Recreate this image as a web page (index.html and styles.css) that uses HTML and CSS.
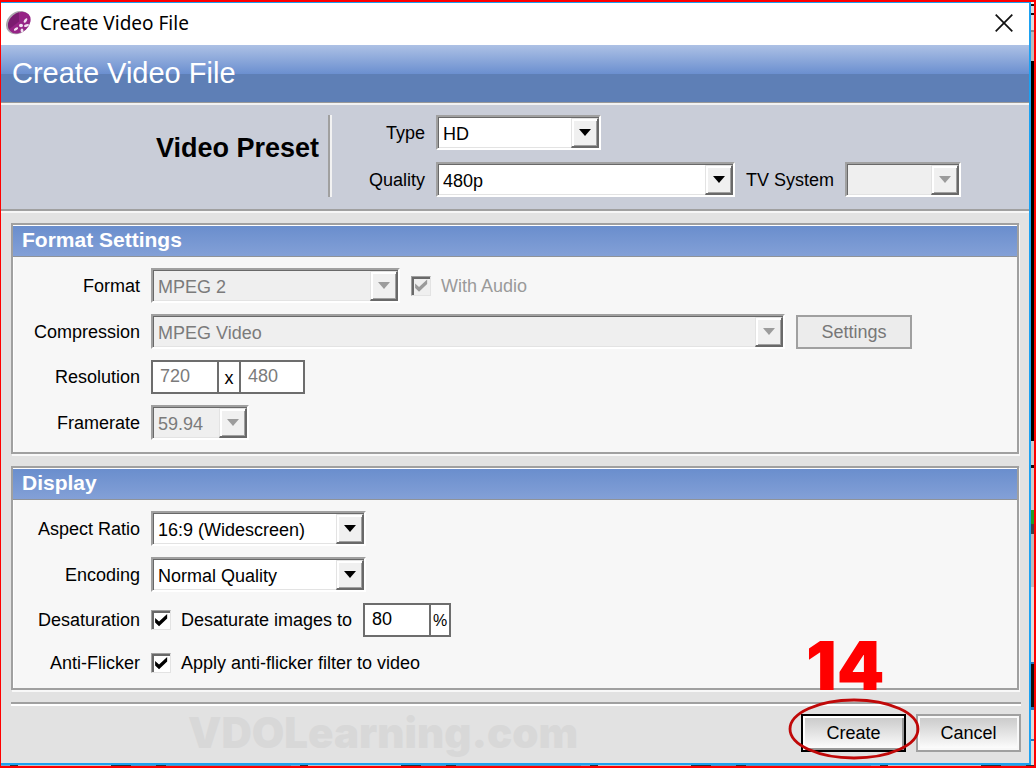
FILE: index.html
```html
<!DOCTYPE html>
<html lang="en">
<head>
<meta charset="utf-8">
<title>Create Video File</title>
<link rel="stylesheet" href="styles.css">
</head>
<body>
<div class="screen">
  <main class="window">
    <header class="titlebar">
      <svg class="app-icon" viewBox="0 0 28 28" aria-hidden="true">
        <g transform="rotate(-42 13 14)">
          <ellipse cx="12.500" cy="13" rx="13" ry="10.500" fill="#aaa6ac"/>
          <ellipse cx="13.500" cy="14" rx="12.500" ry="9.500" fill="#962486"/>
          <path d="M1.500 12C3 5 12 3 20 6L14 13Z" fill="#7b1c70"/>
        </g>
        <g fill="#f2e2f0">
          <ellipse cx="15" cy="16.500" rx="2" ry="1.700"/>
          <ellipse cx="19.500" cy="11.500" rx="1.300" ry="2.600" transform="rotate(35 19.500 11.500)"/>
          <ellipse cx="20.500" cy="16.500" rx="2.600" ry="1.300" transform="rotate(-15 20.500 16.500)"/>
          <ellipse cx="16" cy="21.500" rx="1.400" ry="2"/>
          <ellipse cx="10" cy="20" rx="2.400" ry="1.300" transform="rotate(-35 10 20)"/>
        </g>
      </svg>
      <span class="titlebar-text">Create Video File</span>
      <button class="close" type="button" aria-label="Close">
        <svg viewBox="0 0 18 18" aria-hidden="true"><path d="M.7.7l16.600 16.600M17.300.7L.7 17.300" stroke="#111" stroke-width="1.700" fill="none"/></svg>
      </button>
    </header>

    <h1 class="banner">Create Video File</h1>

    <section class="preset">
      <h2 class="preset-title">Video Preset</h2>
      <div class="preset-fields">
        <div class="row">
          <label class="label" for="type">Type</label>
          <span class="combo w-type"><select id="type"><option>HD</option></select><span class="arrow"></span></span>
        </div>
        <div class="row">
          <label class="label" for="quality">Quality</label>
          <span class="combo w-quality"><select id="quality"><option>480p</option></select><span class="arrow"></span></span>
          <label for="tv">TV System</label>
          <span class="combo w-tv off"><select id="tv" disabled><option></option></select><span class="arrow"></span></span>
        </div>
      </div>
    </section>

    <div class="content">
      <section class="panel">
        <h2 class="panel-title">Format Settings</h2>
        <div class="panel-body">
          <div class="row">
            <label class="label" for="format">Format</label>
            <span class="combo w-format off"><select id="format" disabled><option>MPEG 2</option></select><span class="arrow"></span></span>
            <label class="check off"><input type="checkbox" checked disabled>With Audio</label>
          </div>
          <div class="row">
            <label class="label" for="compression">Compression</label>
            <span class="combo w-compression off"><select id="compression" disabled><option>MPEG Video</option></select><span class="arrow"></span></span>
            <button class="settings" type="button" disabled>Settings</button>
          </div>
          <div class="row">
            <label class="label" for="res-w">Resolution</label>
            <span class="entry off"><input id="res-w" type="text" value="720" disabled><span class="unit">x</span><input type="text" value="480" aria-label="Resolution height" disabled></span>
          </div>
          <div class="row">
            <label class="label" for="rate">Framerate</label>
            <span class="combo w-rate off"><select id="rate" disabled><option>59.94</option></select><span class="arrow"></span></span>
          </div>
        </div>
      </section>

      <section class="panel">
        <h2 class="panel-title">Display</h2>
        <div class="panel-body display">
          <div class="row">
            <label class="label" for="aspect">Aspect Ratio</label>
            <span class="combo w-display"><select id="aspect"><option>16:9 (Widescreen)</option></select><span class="arrow"></span></span>
          </div>
          <div class="row">
            <label class="label" for="encoding">Encoding</label>
            <span class="combo w-display"><select id="encoding"><option>Normal Quality</option></select><span class="arrow"></span></span>
          </div>
          <div class="row">
            <span class="label">Desaturation</span>
            <label class="check"><input type="checkbox" checked>Desaturate images to</label>
            <span class="entry"><input type="text" value="80" aria-label="Desaturation percent"><span class="unit percent">%</span></span>
          </div>
          <div class="row short">
            <span class="label">Anti-Flicker</span>
            <label class="check"><input type="checkbox" checked>Apply anti-flicker filter to video</label>
          </div>
        </div>
      </section>

      <footer class="footer">
        <span class="watermark">VDOLearning.com</span>
        <span class="marked">
          <button class="action primary" type="button">Create</button>
          <span class="step">14</span>
          <svg class="ring" viewBox="0 0 132 62" aria-hidden="true"><ellipse cx="66" cy="31" rx="64" ry="29" fill="none" stroke="#c00808" stroke-width="2.800"/></svg>
        </span>
        <button class="action" type="button">Cancel</button>
      </footer>
    </div>
  </main>
  <div class="behind-right"></div>
  <div class="behind-bottom"></div>
</div>
</body>
</html>
```
FILE: styles.css
```css
* { box-sizing: border-box; }

body {
  margin: 0;
  font: 18px/22px "Liberation Sans", Arial, sans-serif;
  color: #000;
}

h1, h2 { margin: 0; font-weight: normal; }
button, input, select { font: inherit; color: inherit; margin: 0; }

.screen {
  min-height: 100vh;
  display: grid;
  grid-template: 1fr 1px / 1fr 3px;
  border: solid #f00;
  border-width: 2px 2px 2px 1px;
}

.window {
  display: flex;
  flex-direction: column;
  background: #e2e2e2;
  border: solid #1ba1f2;
  border-width: 1px 2px 2px 0;
}

.behind-right {
  background: linear-gradient(#eee 0 2px, #111 2px 4px, #ddd 4px 11px, #111 11px 13px, #ddd 13px 28px, #888 28px 30px, #bbb 30px 59px, #000 59px 439px, #ccc 439px 463px, #111 463px 466px, #ccc 466px 508px, #259b25 508px 522px, #444 522px 532px, #bbb 532px 585px, #ddd 585px 660px, #2878b5 660px 662px, #111 662px 705px, #2878b5 705px 708px, #ddd 708px 737px, #2878b5 737px 739px, #ddd 739px);
}

.behind-bottom {
  grid-column: 1 / -1;
  background: repeating-linear-gradient(90deg, #7ba6c5 0 9px, #29343d 9px 17px, #bec2c4 17px 110px, #29343d 110px 130px, #5791b8 130px 155px, #29343d 155px 165px, #5791b8 165px 290px);
}

.titlebar {
  display: flex;
  align-items: center;
  height: 42px;
  padding: 0 16px 2px 5px;
  background: #fff;
  font: 19px/24px "Noto Sans", "Open Sans", sans-serif;
}
.app-icon { width: 28px; height: 28px; margin-right: 6px; }
.titlebar-text { flex: 1; }
.close { padding: 0; border: 0; background: none; display: flex; }
.close svg { width: 18px; height: 18px; }

.banner {
  height: 58px;
  padding: 0 11px;
  border-bottom: 1px solid #999;
  background: linear-gradient(#adc1e5, #6c90d0 50%, #5e7fb6 50%);
  color: #fff;
  font-size: 29px;
  line-height: 56px;
}

.preset {
  display: flex;
  align-items: stretch;
  padding: 10px 0 12px;
  background: #c9cdd8;
  border-top: 2px solid #f2f2f2;
  border-bottom: 2px solid #a0a0a0;
  box-shadow: 0 2px #f6f6f6;
}
.preset-title {
  width: 331px;
  padding: 18px 11px 0 0;
  border-right: 2px solid #f2f2f2;
  box-shadow: inset -2px 0 #a0a0a0;
  text-align: right;
  font-weight: bold;
  font-size: 27px;
  line-height: 30px;
}
.preset-fields { display: flex; flex-direction: column; gap: 12px; }
.preset .label { width: 93px; }

.row { display: flex; align-items: center; gap: 11px; min-height: 34px; }
.row.short { min-height: 30px; }
.label { width: 127px; text-align: right; }

.combo {
  position: relative;
  display: block;
  height: 35px;
  border: 2px solid;
  border-color: #a0a0a0 #fff #fff #a0a0a0;
  box-shadow: inset 1px 1px #696969, inset -1px -1px #e3e3e3;
  background: #fff;
}
.combo select {
  display: block;
  width: 100%;
  height: 100%;
  padding: 2px 32px 0 5px;
  border: 0;
  appearance: none;
  background: none;
  opacity: 1;
}
.combo.off { background: #efefef; color: #7b7b7b; }
.arrow {
  position: absolute;
  top: 1px;
  right: 0;
  bottom: 0;
  width: 28px;
  display: grid;
  place-items: center;
  border: solid;
  border-width: 1px 2px 2px 1px;
  border-color: #e3e3e3 #696969 #696969 #e3e3e3;
  box-shadow: inset 2px 2px #fff, inset -1px -1px #a0a0a0;
  background: #f0f0f0;
  pointer-events: none;
}
.arrow::before {
  content: "";
  border: solid transparent;
  border-width: 7px 6px 0;
  border-top-color: #000;
}
.off .arrow::before { border-top-color: #9c9c9c; }
.w-type { width: 165px; }
.w-quality { width: 299px; }
.w-tv { width: 116px; }
.w-format { width: 249px; }
.w-compression { width: 634px; }
.w-rate { width: 98px; }
.w-display { width: 215px; }

.content {
  flex: 1;
  display: flex;
  flex-direction: column;
  gap: 12px;
  padding: 12px 8px 8px 10px;
}

.panel {
  margin-right: 2px;
  border: 2px solid #a0a0a0;
  box-shadow: inset 1px 1px #fff, 1px 2px #f8f8f8;
  background: #f7f7f7;
}
.panel-title {
  height: 31px;
  margin-top: 1px;
  padding-left: 9px;
  border-bottom: 1px solid #8f9399;
  background: linear-gradient(#6a8ecd, #83a0d7);
  color: #fff;
  font-weight: bold;
  font-size: 21px;
  line-height: 28px;
}
.panel-body {
  display: flex;
  flex-direction: column;
  gap: 11px;
  padding: 11px 0 12px;
}
.panel-body.display { padding-bottom: 10px; }

.check { display: flex; align-items: center; gap: 10px; }
.check.off { color: #9a9a9a; }
.check input {
  width: 20px;
  height: 20px;
  display: grid;
  place-items: center;
  appearance: none;
  border: 1px solid;
  border-color: #a0a0a0 #e3e3e3 #e3e3e3 #a0a0a0;
  box-shadow: inset 2px 2px #696969;
  background: #fff;
}
.check input:disabled { background: #efefef; }
.check input::before {
  content: "";
  width: 14px;
  height: 14px;
  background: currentColor;
  clip-path: polygon(8% 35%, 36% 60%, 94% 8%, 94% 40%, 36% 94%, 8% 68%);
}

.entry {
  display: flex;
  height: 34px;
  border: 2px solid #6d6d6d;
  background: #fff;
}
.entry input {
  width: 64px;
  padding: 0 7px 2px;
  border: 0;
  background: none;
}
.entry.off input { color: #7b7b7b; }
.unit {
  width: 22px;
  border-left: 2px solid #6d6d6d;
  text-align: center;
  line-height: 32px;
}
.unit + input { border-left: 2px solid #6d6d6d; }
.unit.percent { width: 20px; font-size: 16px; }

.settings {
  width: 116px;
  height: 34px;
  padding: 0;
  border: 2px solid #a0a0a0;
  background: #ececec;
  color: #777;
}

.footer {
  display: flex;
  justify-content: flex-end;
  align-items: flex-start;
  gap: 10px;
  padding-top: 10px;
  border-top: 2px solid #a0a0a0;
  box-shadow: inset 0 2px #fff;
}
.watermark {
  flex: 1;
  padding-left: 177px;
  color: #d8d8d8;
  font: 900 42px/38px Inter, "Liberation Sans", sans-serif;
}
.action {
  display: block;
  width: 105px;
  height: 38px;
  padding: 0;
  border: 2px solid #a0a0a0;
  box-shadow: inset 0 0 0 2px #f8f8f8;
  background: linear-gradient(#c8c8c8, #fff);
}
.action.primary { border-color: #000; box-shadow: inset 2px 2px #fff, inset -2px -2px #999; }

.marked { position: relative; }
.ring { position: absolute; left: -13px; top: -16px; width: 132px; height: 62px; pointer-events: none; }
.step {
  position: absolute;
  left: 5px;
  bottom: 55px;
  color: #f00;
  font: 900 68px/64px Inter, "Liberation Sans", sans-serif;
}
```
